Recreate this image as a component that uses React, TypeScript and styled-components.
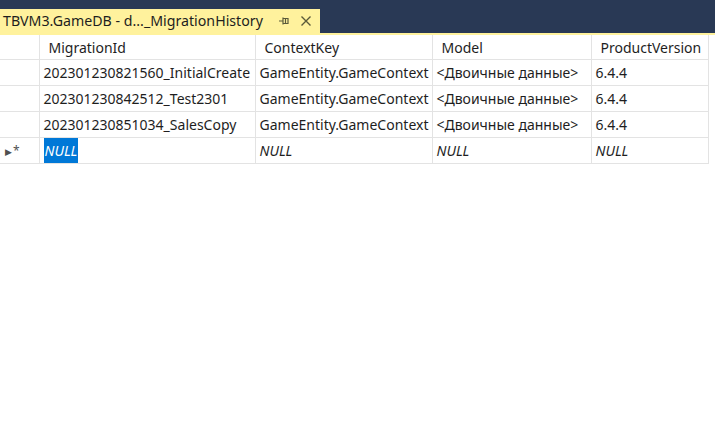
import React from "react";
import styled, { createGlobalStyle } from "styled-components";

const Global = createGlobalStyle`
  html, body { margin: 0; padding: 0; background: #ffffff; }
  body { font-family: "Noto Sans", "Open Sans", sans-serif; }
`;

const Page = styled.div`
  width: 715px;
  height: 437px;
  display: flex;
  flex-direction: column;
  background: #ffffff;
  overflow: hidden;
`;

const TabBar = styled.div`
  height: 33px;
  background: #293955;
  display: flex;
  align-items: flex-end;
  flex-shrink: 0;
`;

const Tab = styled.div`
  height: 24px;
  width: 320px;
  background: #fff29d;
  display: flex;
  align-items: center;
  padding-left: 3px;
  box-sizing: border-box;
  font-size: 14.2px;
  color: #1e1e1e;
  white-space: nowrap;
`;

const TabTitle = styled.span`
  flex: 1;
  line-height: 24px;
`;

const TabIcon = styled.span<{ $mr: number }>`
  width: 14px;
  height: 16px;
  display: flex;
  align-items: center;
  justify-content: center;
  margin-right: ${(p) => p.$mr}px;
`;

const WellLine = styled.div`
  height: 2px;
  background: #fff29d;
  flex-shrink: 0;
`;

const Table = styled.table`
  border-collapse: collapse;
  table-layout: fixed;
  width: 708px;
  font-size: 14px;
  color: #1e1e1e;
`;

const HeadCell = styled.th`
  height: 24px;
  padding: 0 0 0 9px;
  text-align: left;
  font-weight: normal;
  border: 1px solid #e3e3e3;
  border-top: none;
  white-space: nowrap;
  overflow: hidden;
  &:first-child { border-left: none; }
`;

const Cell = styled.td<{ $italic?: boolean }>`
  height: 25px;
  padding: 0 0 0 4px;
  border: 1px solid #e3e3e3;
  white-space: nowrap;
  overflow: hidden;
  font-style: ${(p) => (p.$italic ? "italic" : "normal")};
  &:first-child { border-left: none; }
`;

const RowHead = styled(Cell)`
  padding: 0 0 0 5px;
  color: #505050;
  font-size: 12px;
`;

const Marker = styled.span`
  font-size: 9px;
  margin-right: 1px;
`;

const Selected = styled.span`
  background: #0078d7;
  color: #ffffff;
  padding: 3px 1px;
`;

const cols = [39, 216, 177, 159, 117];

const rows = [
  ["202301230821560_InitialCreate", "GameEntity.GameContext", "<Двоичные данные>", "6.4.4"],
  ["202301230842512_Test2301", "GameEntity.GameContext", "<Двоичные данные>", "6.4.4"],
  ["202301230851034_SalesCopy", "GameEntity.GameContext", "<Двоичные данные>", "6.4.4"],
];

export default function App() {
  return (
    <Page>
      <Global />
      <TabBar>
        <Tab>
          <TabTitle>TBVM3.GameDB - d..._MigrationHistory</TabTitle>
          <TabIcon $mr={8}>
            <svg width="12" height="12" viewBox="0 0 12 12">
              <path d="M1 6h4M5 2.5v7M5 3.5h5v5H5M7.5 3.5v5" stroke="#5a5a3a" strokeWidth="1.2" fill="none" />
            </svg>
          </TabIcon>
          <TabIcon $mr={7}>
            <svg width="12" height="12" viewBox="0 0 12 12">
              <path d="M1.5 1.5l9 9M10.5 1.5l-9 9" stroke="#5a5a3a" strokeWidth="1.4" />
            </svg>
          </TabIcon>
        </Tab>
      </TabBar>
      <WellLine />
      <Table>
        <colgroup>
          {cols.map((w, i) => (
            <col key={i} style={{ width: w }} />
          ))}
        </colgroup>
        <thead>
          <tr>
            <HeadCell />
            <HeadCell>MigrationId</HeadCell>
            <HeadCell>ContextKey</HeadCell>
            <HeadCell>Model</HeadCell>
            <HeadCell>ProductVersion</HeadCell>
          </tr>
        </thead>
        <tbody>
          {rows.map((r, i) => (
            <tr key={i}>
              <RowHead />
              {r.map((c, j) => (
                <Cell key={j}>{c}</Cell>
              ))}
            </tr>
          ))}
          <tr>
            <RowHead>
              <Marker>▶</Marker>*
            </RowHead>
            <Cell $italic>
              <Selected>NULL</Selected>
            </Cell>
            <Cell $italic>NULL</Cell>
            <Cell $italic>NULL</Cell>
            <Cell $italic>NULL</Cell>
          </tr>
        </tbody>
      </Table>
    </Page>
  );
}
